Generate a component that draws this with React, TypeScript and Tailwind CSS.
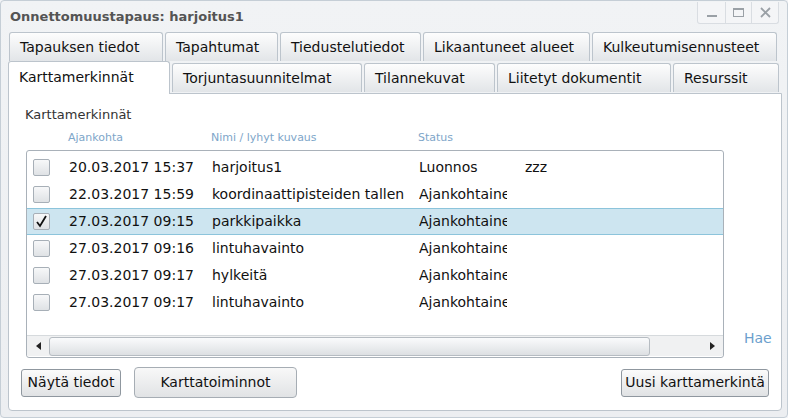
import React from "react";

const row1 = [
  { t: "Tapauksen tiedot", w: 154 },
  { t: "Tapahtumat", w: 113 },
  { t: "Tiedustelutiedot", w: 141 },
  { t: "Likaantuneet alueet", w: 167 },
  { t: "Kulkeutumisennusteet", w: 185 },
];
const row2 = [
  { t: "Torjuntasuunnitelmat", w: 190 },
  { t: "Tilannekuvat", w: 131 },
  { t: "Liitetyt dokumentit", w: 174 },
  { t: "Resurssit", w: 106 },
];

const rows = [
  { d: "20.03.2017 15:37", n: "harjoitus1", s: "Luonnos", x: "zzz" },
  { d: "22.03.2017 15:59", n: "koordinaattipisteiden tallen", s: "Ajankohtainen", x: "" },
  { d: "27.03.2017 09:15", n: "parkkipaikka", s: "Ajankohtainen", x: "", sel: true },
  { d: "27.03.2017 09:16", n: "lintuhavainto", s: "Ajankohtainen", x: "" },
  { d: "27.03.2017 09:17", n: "hylkeitä", s: "Ajankohtainen", x: "" },
  { d: "27.03.2017 09:17", n: "lintuhavainto", s: "Ajankohtainen", x: "" },
];

function Tab({ t, w }: { t: string; w: number }) {
  return (
    <div
      className="h-[29px] shrink-0 flex items-center pl-[10px] rounded-t-[3px] border border-b-0 border-[#bcc4cc] bg-gradient-to-b from-[#fdfdfd] to-[#e2e5e8] text-[14px] text-[#111] whitespace-nowrap"
      style={{ width: w }}
    >
      {t}
    </div>
  );
}

export default function App() {
  return (
    <div className="w-[788px] h-[418px] overflow-hidden bg-[#f3f4f6] font-['DejaVu_Sans',sans-serif]">
      <div className="w-[788px] h-[418px] border border-[#c5ced6] rounded-[4px] bg-gradient-to-b from-[#f1f3f5] to-[#eceef1] flex flex-col">
        {/* Title bar */}
        <div className="h-[31px] flex items-start justify-between pl-[9px] pr-[8px]">
          <div className="mt-[6px] text-[13px] font-bold text-[#545454]">Onnettomuustapaus: harjoitus1</div>
          <div className="flex mt-[1px] border border-[#d9dde2] border-t-0 rounded-b-[3px] bg-[#f4f5f7]">
            <div className="w-[27px] h-[21px] flex items-end justify-center pb-[6px]">
              <div className="w-[10px] h-[2px] bg-[#9aa0a6]" />
            </div>
            <div className="w-[26px] h-[21px] border-l border-[#d9dde2] flex items-center justify-center">
              <div className="w-[11px] h-[9px] border border-[#9aa0a6] border-t-2" />
            </div>
            <div className="w-[27px] h-[21px] border-l border-[#d9dde2] flex items-center justify-center">
              <svg width="11" height="11" viewBox="0 0 11 11">
                <path d="M1 1L10 10M10 1L1 10" stroke="#9aa0a6" strokeWidth="1.8" />
              </svg>
            </div>
          </div>
        </div>

        {/* Tabs */}
        <div className="pl-[7px] flex flex-col">
          <div className="flex gap-[2px] pl-[1px]">
            {row1.map((r) => (
              <Tab key={r.t} t={r.t} w={r.w} />
            ))}
          </div>
          <div className="flex items-end gap-[2px] h-[32px]">
            <div className="relative z-10 w-[162px] h-[33px] -mb-[1px] flex items-center pl-[10px] pb-[2px] rounded-t-[3px] border border-b-0 border-[#bcc4cc] bg-white text-[14px] text-[#111]">
              Karttamerkinnät
            </div>
            {row2.map((r) => (
              <div key={r.t} className="h-[30px] flex">
                <Tab t={r.t} w={r.w} />
              </div>
            ))}
          </div>
        </div>

        {/* Panel */}
        <div className="ml-[7px] w-[774px] h-[318px] border border-[#bcc4cc] rounded-b-[4px] bg-white flex flex-col pt-[13px]">
          <div className="pl-[16px] text-[13px] leading-[16px] text-[#333]">Karttamerkinnät</div>
          <div className="flex mt-[8px] h-[14px] text-[11px] leading-[14px] text-[#7ea6c9]">
            <div className="ml-[59px] w-[143px]">Ajankohta</div>
            <div className="w-[207px]">Nimi / lyhyt kuvaus</div>
            <div>Status</div>
          </div>
          <div className="flex items-end mt-[5px]">
            <div className="ml-[17px] w-[698px] h-[208px] border border-[#a9b1b9] rounded-[3px] flex flex-col bg-white">
              <div className="flex-1 pt-[3px]">
                {rows.map((r, i) => (
                  <div
                    key={i}
                    className={
                      "h-[27px] flex items-center text-[14px] text-[#111] whitespace-nowrap " +
                      (r.sel ? "bg-[#cde5f0] border-y border-[#8cc4db]" : "")
                    }
                  >
                    <div className="ml-[6px] w-[17px] h-[17px] rounded-[2px] border border-[#a7afb7] bg-gradient-to-b from-[#f7f8f9] to-[#dfe2e5] flex items-center justify-center">
                      {r.sel ? (
                        <svg width="13" height="13" viewBox="0 0 13 13">
                          <path d="M2 7L5 11L11 1" stroke="#111" strokeWidth="1.8" fill="none" />
                        </svg>
                      ) : null}
                    </div>
                    <div className="ml-[19px] w-[143px]">{r.d}</div>
                    <div className="w-[207px] overflow-hidden">{r.n}</div>
                    <div className="w-[88px] overflow-hidden">{r.s}</div>
                    <div className="ml-[18px]">{r.x}</div>
                  </div>
                ))}
              </div>
              {/* scrollbar */}
              <div className="h-[21px] mb-[1px] flex items-center bg-[#f0f1f2] border-t border-[#d6dadd]">
                <div className="w-[22px] flex justify-center">
                  <svg width="5" height="8" viewBox="0 0 5 8"><path d="M5 0L0 4L5 8Z" fill="#222" /></svg>
                </div>
                <div className="w-[601px] h-[19px] rounded-[3px] border border-[#b6bcc2] bg-gradient-to-b from-[#fafbfc] to-[#dde0e3]" />
                <div className="flex-1 flex justify-end pr-[8px]">
                  <svg width="5" height="8" viewBox="0 0 5 8"><path d="M0 0L5 4L0 8Z" fill="#222" /></svg>
                </div>
              </div>
            </div>
            <div className="ml-[20px] mb-[9px] text-[14px] text-[#6d9fcd]">Hae</div>
          </div>
          <div className="flex items-center mt-[9px] pl-[12px] pr-[12px]">
            <button className="w-[100px] h-[28px] rounded-[3px] border border-[#8f979f] bg-gradient-to-b from-[#fbfbfb] to-[#e0e2e4] text-[14px] text-[#111]">
              Näytä tiedot
            </button>
            <button className="ml-[13px] w-[163px] h-[31px] rounded-[4px] border border-[#a6adb4] bg-gradient-to-b from-[#f8f8f8] to-[#e1e3e5] text-[14px] text-[#111]">
              Karttatoiminnot
            </button>
            <div className="flex-1" />
            <button className="w-[148px] h-[28px] rounded-[3px] border border-[#8f979f] bg-gradient-to-b from-[#fbfbfb] to-[#e0e2e4] text-[14px] text-[#111] whitespace-nowrap">
              Uusi karttamerkintä
            </button>
          </div>
        </div>
      </div>
    </div>
  );
}
